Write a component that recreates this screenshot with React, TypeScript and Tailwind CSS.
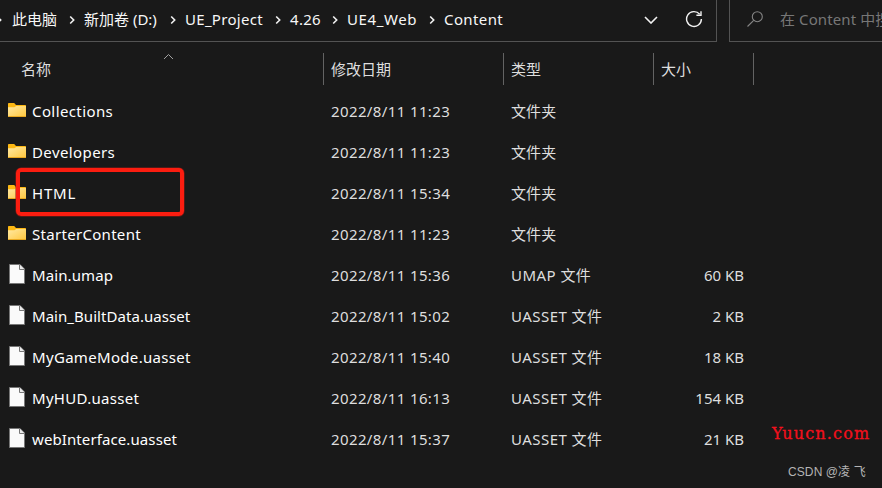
import type { ReactNode } from "react";

type Kind = "folder" | "file";

type Entry = {
  kind: Kind;
  name: string;
  tracking: string;
  modified: string;
  type: string;
  size?: string;
};

const ENTRIES: Entry[] = [
  { kind: "folder", name: "Collections", tracking: "tracking-[0.4px]", modified: "2022/8/11 11:23", type: "文件夹" },
  { kind: "folder", name: "Developers", tracking: "tracking-[0.4px]", modified: "2022/8/11 11:23", type: "文件夹" },
  { kind: "folder", name: "HTML", tracking: "tracking-[0.8px]", modified: "2022/8/11 15:34", type: "文件夹" },
  { kind: "folder", name: "StarterContent", tracking: "tracking-[0.3px]", modified: "2022/8/11 11:23", type: "文件夹" },
  { kind: "file", name: "Main.umap", tracking: "tracking-[0.1px]", modified: "2022/8/11 15:36", type: "UMAP 文件", size: "60 KB" },
  { kind: "file", name: "Main_BuiltData.uasset", tracking: "tracking-[0.05px]", modified: "2022/8/11 15:02", type: "UASSET 文件", size: "2 KB" },
  { kind: "file", name: "MyGameMode.uasset", tracking: "tracking-[0.32px]", modified: "2022/8/11 15:40", type: "UASSET 文件", size: "18 KB" },
  { kind: "file", name: "MyHUD.uasset", tracking: "tracking-[0.3px]", modified: "2022/8/11 16:13", type: "UASSET 文件", size: "154 KB" },
  { kind: "file", name: "webInterface.uasset", tracking: "tracking-[0.1px]", modified: "2022/8/11 15:37", type: "UASSET 文件", size: "21 KB" },
];

const CRUMBS = [
  { label: "此电脑", style: "w-[57px]" },
  { label: "新加卷 (D:)", style: "w-[86px]" },
  { label: "UE_Project", style: "w-[90px] tracking-[0.3px]" },
  { label: "4.26", style: "w-[42px] tracking-[0.3px]" },
  { label: "UE4_Web", style: "w-[82px] tracking-[0.6px]" },
  { label: "Content", style: "w-[70px] tracking-[0.4px]" },
];

function CrumbChevron() {
  return (
    <svg className="mt-[2px] h-[10px] w-[6px] shrink-0" viewBox="0 0 6 10" fill="none">
      <path d="M1.2 1.5 4.7 5 1.2 8.5" stroke="#f2f2f2" strokeWidth="1.6" />
    </svg>
  );
}

function FolderIcon() {
  return (
    <svg className="h-[14px] w-[18px]" viewBox="0 0 18 14">
      <defs>
        <linearGradient id="folder" x1="0" y1="0" x2="1" y2="1">
          <stop offset="0" stopColor="#ffe9a3" />
          <stop offset="1" stopColor="#ffc73d" />
        </linearGradient>
      </defs>
      <path d="M0 .8Q0 0 .8 0H6.2L8 2H17.3Q18 2 18 2.8V8H0Z" fill="#fdb813" />
      <path d="M0 4.2H6.4L8.2 3H18V13.2Q18 14 17.2 14H.8Q0 14 0 13.2Z" fill="url(#folder)" />
      <path d="M.2 13.5H17.8" stroke="#e9a820" />
    </svg>
  );
}

function FileIcon() {
  return (
    <svg className="ml-px h-[20px] w-[16px]" viewBox="0 0 16 20">
      <path d="M.5.5H11L15.5 5V19.5H.5Z" fill="#fafafa" stroke="#777" />
      <path d="M10.5 .5V5.5H15.5" fill="#ececec" stroke="#777" />
    </svg>
  );
}

function ColumnHeader({ children }: { children: ReactNode }) {
  return (
    <div className="flex h-[32px] items-center border-l border-[#636363] pl-[7px]">
      {children}
    </div>
  );
}

function AddressBar() {
  return (
    <div className="flex h-[42px]">
      <div className="flex w-[717px] items-center border-r border-b border-[#535353] pb-[4px] text-[#f7f7f7]">
        <div className="-ml-1">
          <CrumbChevron />
        </div>
        <div className="flex items-center pl-[10px]">
          {CRUMBS.map((crumb, i) => (
            <div key={crumb.label} className="flex items-center">
              <span className={`${crumb.style} whitespace-nowrap`}>{crumb.label}</span>
              {i < CRUMBS.length - 1 && (
                <div className="mr-[9px]">
                  <CrumbChevron />
                </div>
              )}
            </div>
          ))}
        </div>
        <div className="mr-[13px] ml-auto flex items-center gap-[27px]">
          <svg className="mt-[2px] h-[8px] w-[14px]" viewBox="0 0 14 8" fill="none">
            <path d="M1 1 7 7 13 1" stroke="#f2f2f2" strokeWidth="1.6" />
          </svg>
          <svg className="h-[18px] w-[18px]" viewBox="0 0 18 18" fill="none" stroke="#f2f2f2" strokeWidth="1.4">
            <path d="M14.7 4.3A7.4 7.4 0 1 0 16.4 9" />
            <path d="M16 1.2V5.3H11.4" />
          </svg>
        </div>
      </div>
      <div className="ml-[12px] flex flex-1 items-center overflow-hidden border-b border-l border-[#535353] pb-[3px] pl-[17px] text-[#777]">
        <svg className="h-[16px] w-[16px] shrink-0" viewBox="0 0 16 16" fill="none" stroke="#858585" strokeWidth="1.1">
          <circle cx="10.3" cy="5.7" r="5" />
          <path d="M6.7 9.3.5 15.5" />
        </svg>
        <span className="ml-[17px] whitespace-nowrap tracking-[0.1px]">在 Content 中搜</span>
      </div>
    </div>
  );
}

function Row({ entry }: { entry: Entry }) {
  return (
    <div className="grid h-[41px] grid-cols-[331px_180px_150px_83px] items-center pb-[2px] text-[#dedede]">
      <div className="flex items-center pl-[8px]">
        <span className="flex w-[24px] items-center pb-px">
          {entry.kind === "folder" ? <FolderIcon /> : <FileIcon />}
        </span>
        <span className={`${entry.tracking} whitespace-nowrap text-white`}>{entry.name}</span>
      </div>
      <span className="tracking-[0.38px]">{entry.modified}</span>
      <span className={entry.kind === "file" ? "tracking-[0.45px]" : "tracking-[0.1px]"}>{entry.type}</span>
      <span className="text-right">{entry.size}</span>
    </div>
  );
}

export default function App() {
  return (
    <div className="relative h-[488px] w-[882px] overflow-hidden bg-[#191919] font-['Noto_Sans','Noto_Sans_CJK_SC',sans-serif] text-[15px] leading-5">
      <AddressBar />
      <div className="relative grid h-[49px] grid-cols-[323px_180px_150px_100px_1px] items-start pt-[11px] text-[#dedede]">
        <div className="flex h-[32px] items-center pl-[21px]">名称</div>
        <ColumnHeader>修改日期</ColumnHeader>
        <ColumnHeader>类型</ColumnHeader>
        <ColumnHeader>大小</ColumnHeader>
        <ColumnHeader>{null}</ColumnHeader>
        <svg className="absolute top-[11px] left-[163px] h-[7px] w-[11px]" viewBox="0 0 11 7" fill="none">
          <path d="M1 6 5.5 1.5 10 6" stroke="#a0a0a0" />
        </svg>
      </div>
      {ENTRIES.map((entry) => (
        <Row key={entry.name} entry={entry} />
      ))}
      <div className="absolute top-[168px] left-[16px] h-[48px] w-[168px] rounded-[5px] border-4 border-[#fb1d10] shadow-[0_0_0_0.5px_#8a1a14]" />
      <span className="absolute top-[424px] left-[772px] font-['DejaVu_Serif',serif] text-[16px] tracking-[1.15px] text-[#f2101c] [-webkit-text-stroke:0.3px_#f2101c]">
        Yuucn.com
      </span>
      <span className="absolute top-[462px] left-[788px] font-['Liberation_Sans','Noto_Sans_CJK_SC',sans-serif] text-[12px] tracking-[0.1px] whitespace-nowrap text-[#b4b4b4]">
        CSDN @凌 飞
      </span>
    </div>
  );
}
